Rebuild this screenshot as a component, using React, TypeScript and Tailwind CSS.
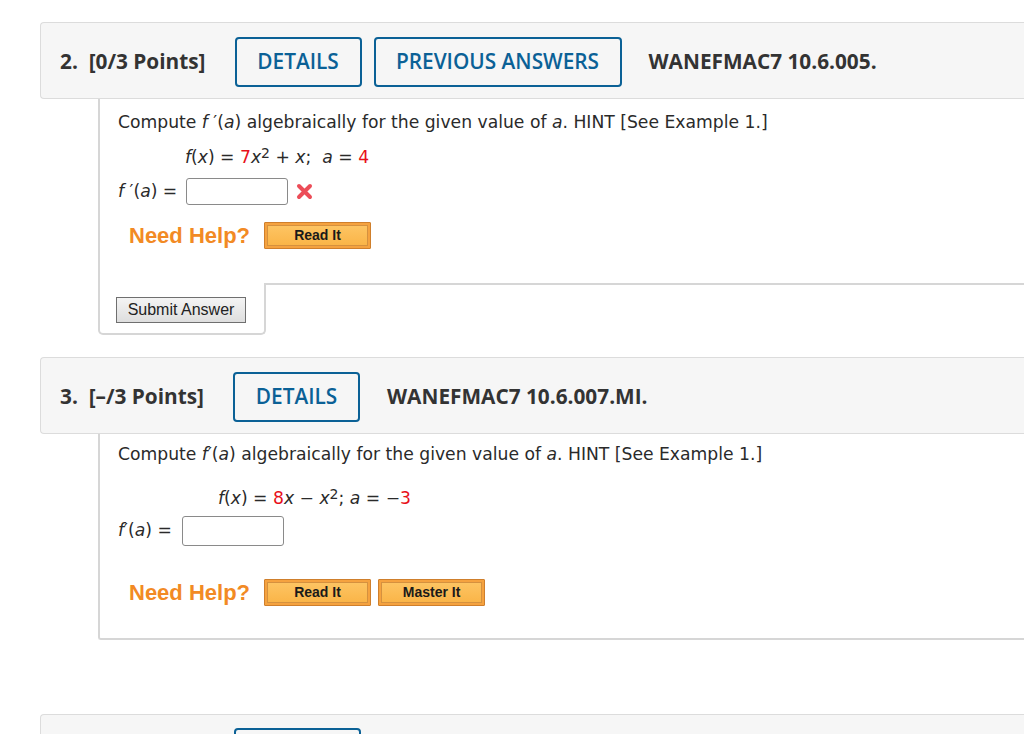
import React from "react";

function Header({ num, points, code, prev }: { num: string; points: string; code: string; prev?: boolean }) {
  return (
    <div className="flex h-[77px] w-[1100px] items-center rounded-l-[4px] border border-r-0 border-[#dcdcdc] bg-[#f6f6f6] pl-[19px] pt-[2px] font-['Open_Sans',sans-serif] text-[20.8px] font-bold text-[#333]">
      <span className="whitespace-pre">{num}  {points}</span>
      <div className="ml-[29px] flex h-[50px] w-[127px] items-center justify-center rounded-[4px] border-2 border-[#0b6196] font-semibold text-[#0b6196]">
        DETAILS
      </div>
      {prev ? (
        <div className="ml-[12px] flex h-[50px] w-[248px] items-center justify-center rounded-[4px] border-2 border-[#0b6196] font-semibold text-[#0b6196]">
          PREVIOUS ANSWERS
        </div>
      ) : null}
      <span className="ml-[27px]">{code}</span>
    </div>
  );
}

function OrangeButton({ label }: { label: string }) {
  return (
    <div className="flex h-[27px] w-[107px] rounded-[1px] border border-[#cf7f2c] bg-[#f5a23f] p-[2px]">
      <div className="flex flex-1 items-center justify-center border border-[#d5913f] bg-gradient-to-b from-[#fdc462] to-[#fab548] font-['Liberation_Sans',sans-serif] text-[14px] font-bold text-[#1a1a1a]">
        {label}
      </div>
    </div>
  );
}

function RedX() {
  return (
    <svg width="17" height="17" viewBox="0 0 17 17" className="ml-[8px]">
      <path d="M3 3 L14 14 M14 3 L3 14" stroke="#ec4d58" strokeWidth="4" strokeLinecap="round" />
    </svg>
  );
}

const I = ({ children }: { children: React.ReactNode }) => <i>{children}</i>;
const R = ({ children }: { children: React.ReactNode }) => <span className="text-[#e8101a]">{children}</span>;

export default function App() {
  return (
    <div className="h-[734px] w-[1024px] overflow-hidden bg-white">
      <div className="ml-[40px] pt-[22px]">
        {/* Question 2 */}
        <Header num="2." points="[0/3 Points]" code="WANEFMAC7 10.6.005." prev />
        <div className="ml-[58px] font-[DejaVu_Sans,sans-serif] text-[17.2px] text-[#2a2a2a]">
          <div className="h-[184px] border-l-2 border-[#d6d6d6] pl-[18px] pt-[13px]">
            <div className="flex h-[22px] items-center">
              Compute&nbsp;<I>f</I>&nbsp;′(<I>a</I>) algebraically for the given value of&nbsp;<I>a</I>. HINT [See Example 1.]
            </div>
            <div className="mt-[12px] flex h-[24px] items-center whitespace-pre pl-[67px]">
              <I>f</I>(<I>x</I>) = <R>7</R><I>x</I>
              <sup className="relative -top-[5px] text-[14px]">2</sup> + <I>x</I>;  <I>a</I> = <R>4</R>
            </div>
            <div className="mt-[8px] flex h-[27px] items-center">
              <span className="whitespace-pre">
                <I>f</I> ′(<I>a</I>) ={" "}
              </span>
              <div className="ml-[3px] h-[27px] w-[102px] rounded-[3px] border border-[#8a8a8a]" />
              <RedX />
            </div>
            <div className="mt-[17px] flex h-[27px] items-center pl-[11px]">
              <span className="font-['Liberation_Sans',sans-serif] text-[22px] font-bold text-[#f28a24]">Need Help?</span>
              <div className="ml-[14px]">
                <OrangeButton label="Read It" />
              </div>
            </div>
          </div>
          <div className="flex">
            <div className="h-[52px] w-[168px] rounded-b-[5px] border-x-2 border-b-2 border-[#d6d6d6] pl-[16px] pt-[14px]">
              <div className="flex h-[26px] w-[130px] items-center justify-center border border-[#6f6f6f] bg-gradient-to-b from-[#f4f4f4] to-[#dedede] font-['Liberation_Sans',sans-serif] text-[16px] text-[#222]">
                Submit Answer
              </div>
            </div>
            <div className="flex-1 border-t-2 border-[#d6d6d6]" />
          </div>
        </div>

        {/* Question 3 */}
        <div className="mt-[22px]">
          <Header num="3." points="[–/3 Points]" code="WANEFMAC7 10.6.007.MI." />
        </div>
        <div className="ml-[58px] h-[206px] rounded-bl-[3px] border-b-2 border-l-2 border-[#d6d6d6] pl-[18px] pt-[10px] font-[DejaVu_Sans,sans-serif] text-[17.2px] text-[#2a2a2a]">
          <div className="flex h-[22px] items-center">
            Compute&nbsp;<I>f</I>′(<I>a</I>) algebraically for the given value of&nbsp;<I>a</I>. HINT [See Example 1.]
          </div>
          <div className="mt-[21px] flex h-[24px] items-center whitespace-pre pl-[100px]">
            <I>f</I>(<I>x</I>) = <R>8</R><I>x</I> − <I>x</I>
            <sup className="relative -top-[5px] text-[14px]">2</sup>; <I>a</I> = −<R>3</R>
          </div>
          <div className="mt-[5px] flex h-[30px] items-center">
            <span className="whitespace-pre">
              <I>f</I>′(<I>a</I>) ={" "}
            </span>
            <div className="ml-[5px] h-[30px] w-[102px] rounded-[3px] border border-[#8a8a8a]" />
          </div>
          <div className="mt-[33px] flex h-[27px] items-center pl-[11px]">
            <span className="font-['Liberation_Sans',sans-serif] text-[22px] font-bold text-[#f28a24]">Need Help?</span>
            <div className="ml-[14px]">
              <OrangeButton label="Read It" />
            </div>
            <div className="ml-[7px]">
              <OrangeButton label="Master It" />
            </div>
          </div>
        </div>

        {/* Question 4 (partial) */}
        <div className="mt-[74px] flex h-[77px] w-[1100px] rounded-l-[4px] border border-r-0 border-[#dcdcdc] bg-[#f6f6f6] pl-[193px] pt-[13px]">
          <div className="h-[50px] w-[127px] rounded-[4px] border-2 border-[#0b6196]" />
        </div>
      </div>
    </div>
  );
}
